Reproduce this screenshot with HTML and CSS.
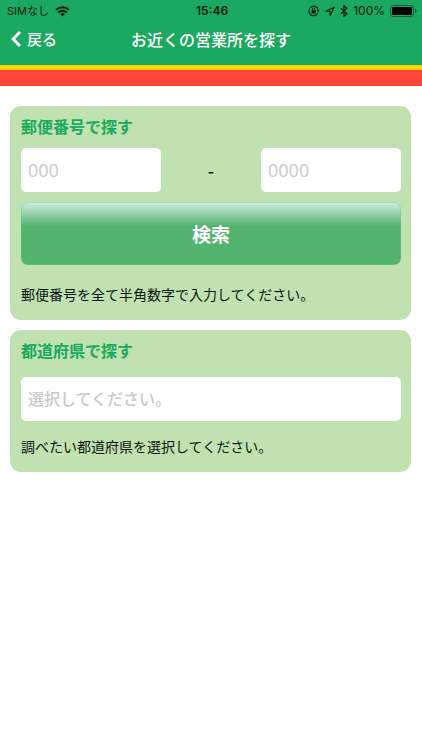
FILE: index.html
```html
<!DOCTYPE html>
<html lang="ja">
<head>
<meta charset="utf-8">
<meta name="viewport" content="width=device-width, initial-scale=1">
<title>お近くの営業所を探す</title>
<link rel="stylesheet" href="styles.css">
</head>
<body>
<header class="header">
  <div class="status">
    <div class="status-left">
      <span class="carrier">SIMなし</span>
      <svg width="15" height="11" viewBox="0 0 15 11" fill="none" stroke="currentColor" stroke-width="2" aria-hidden="true">
        <path d="M1 3.900a9.200 9.200 0 0 1 13 0M3.200 6.500a6 6 0 0 1 8.600 0"/>
        <path d="M7.500 10.500 5.200 8.200a3.300 3.300 0 0 1 4.600 0z" fill="currentColor" stroke="none"/>
      </svg>
    </div>
    <time class="clock">15:46</time>
    <div class="status-right">
      <svg width="12" height="12" viewBox="0 0 12 12" fill="none" stroke="currentColor" stroke-width="1.1" aria-hidden="true">
        <path d="M10 8A4.800 4.800 0 1 1 10.300 4.800"/>
        <path d="M8.600 5h3.400l-1.700 2.300z" fill="currentColor" stroke="none"/>
        <path d="M3.500 5.200h4.400v3.400H3.500z" fill="currentColor" stroke="none"/>
        <path d="M4.500 5.400V4.200a1.200 1.200 0 0 1 2.400 0v1.200" stroke-width=".9"/>
      </svg>
      <svg width="10" height="11" viewBox="0 0 10 11" fill="none" stroke="currentColor" stroke-width="1.1" aria-hidden="true">
        <path d="M9.200 1.200.8 5.300h4.300v4.500z" stroke-linejoin="round"/>
      </svg>
      <svg width="8" height="12" viewBox="0 0 8 12" fill="none" stroke="currentColor" stroke-width="1.200" aria-hidden="true">
        <path d="m.8 3.300 6.200 5.400L4 11.200V.8l3 2.500L.8 8.700"/>
      </svg>
      <span class="percent">100%</span>
      <svg width="27" height="12" viewBox="0 0 27 12" aria-hidden="true">
        <rect x=".5" y=".5" width="23" height="11" rx="2.500" fill="none" stroke="#0b5e35"/>
        <rect x="2" y="2" width="20" height="8" rx="1" fill="#000"/>
        <path d="M25 4v4c1-.3 1.500-1.100 1.500-2S26 4.300 25 4z" fill="#0b5e35"/>
      </svg>
    </div>
  </div>
  <nav class="nav">
    <a class="back" href="#">
      <svg width="10" height="16" viewBox="0 0 10 16" fill="none" stroke="currentColor" stroke-width="3" aria-hidden="true"><path d="M9 1 2.200 8 9 15"/></svg>
      <span>戻る</span>
    </a>
    <h1 class="title">お近くの営業所を探す</h1>
  </nav>
  <div class="stripe"></div>
</header>
<main class="main">
  <form class="card">
    <h2 class="heading">郵便番号で探す</h2>
    <div class="zip">
      <input class="field" type="text" inputmode="numeric" maxlength="3" placeholder="000" aria-label="郵便番号（上3桁）">
      <span class="dash">-</span>
      <input class="field" type="text" inputmode="numeric" maxlength="4" placeholder="0000" aria-label="郵便番号（下4桁）">
    </div>
    <button class="search" type="button">検索</button>
    <p class="hint">郵便番号を全て半角数字で入力してください。</p>
  </form>
  <form class="card card-pref">
    <h2 class="heading" id="pref-label">都道府県で探す</h2>
    <select class="field select" aria-labelledby="pref-label">
      <option>選択してください。</option>
    </select>
    <p class="hint">調べたい都道府県を選択してください。</p>
  </form>
</main>
</body>
</html>
```

FILE: styles.css
```css
* {
  box-sizing: border-box;
}

body {
  margin: 0;
  background: #fff;
  color: #0c160c;
  font-family: "Noto Sans CJK JP", sans-serif;
}

h1, h2, p {
  margin: 0;
}

.header {
  background: #1ba860;
}

.status {
  display: grid;
  grid-template-columns: 1fr auto 1fr;
  align-items: center;
  height: 22px;
  padding: 0 5px 0 7px;
  color: #03200f;
  font-family: Inter, "Noto Sans CJK JP", sans-serif;
  font-size: 12px;
  line-height: 20px;
}

.status-left,
.status-right {
  display: flex;
  align-items: center;
  gap: 6px;
}

.status-right {
  justify-content: flex-end;
  gap: 5px;
}

.carrier {
  font-size: 11px;
}

.clock {
  font-weight: 600;
}

.nav {
  display: grid;
  grid-template-columns: 1fr auto 1fr;
  align-items: center;
  height: 43px;
  padding: 0 11px 9px;
  color: #fff;
}

.back {
  display: flex;
  align-items: center;
  gap: 6px;
  color: inherit;
  font-size: 15px;
  font-weight: 500;
  line-height: 22px;
  text-decoration: none;
}

.title {
  font-size: 16px;
  font-weight: 500;
  line-height: 22px;
}

.stripe {
  height: 21px;
  border-top: 5px solid #ffd600;
  background: #ff4638;
}

.main {
  display: grid;
  gap: 10px;
  padding: 20px 11px 20px 10px;
}

.card {
  padding: 10px 10px 16px 11px;
  border-radius: 11px;
  background: #c0e2b2;
}

.heading {
  margin-bottom: 12px;
  color: #1ba860;
  font-size: 16px;
  font-weight: 700;
  line-height: 20px;
}

.zip {
  display: grid;
  grid-template-columns: 7fr 5fr 7fr;
  align-items: center;
}

.field {
  width: 100%;
  height: 44px;
  padding: 0 7px;
  border: 0;
  border-radius: 5px;
  background: #fff;
  color: #222;
  font-family: "Open Sans", "Noto Sans CJK JP", sans-serif;
  font-size: 18px;
}

.field::placeholder {
  color: #c7c7cd;
  opacity: 1;
}

.dash {
  font-size: 18px;
  font-weight: 500;
  text-align: center;
}

.search {
  display: block;
  width: 100%;
  height: 63px;
  margin: 10px 0 19px;
  border: 1px solid #6fc08766;
  border-radius: 7px;
  background: linear-gradient(#d5eee0, #52b371 24px) border-box #52b371;
  color: #fff;
  font-family: inherit;
  font-size: 19px;
  font-weight: 700;
}

.hint {
  font-size: 14px;
  line-height: 20px;
}

.card-pref .heading {
  margin-bottom: 17px;
}

.select {
  display: block;
  margin-bottom: 15px;
  appearance: none;
  color: #c7c7cd;
  font-size: 16px;
  font-weight: 500;
}
```
